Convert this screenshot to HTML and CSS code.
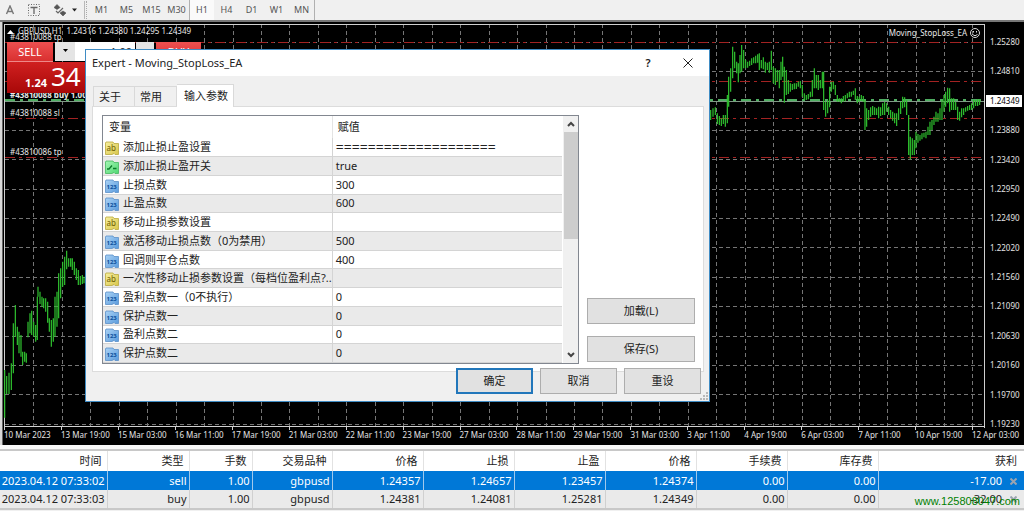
FILE: index.html
```html
<!DOCTYPE html>
<html lang="zh-CN">
<head>
<meta charset="utf-8">
<title>Expert - Moving_StopLoss_EA</title>
<link rel="stylesheet" href="styles.css">
</head>
<body>
<svg class="defs" aria-hidden="true">
  <defs>
    <linearGradient id="gy" x2="1" y2="1"><stop offset="0" stop-color="#f6efa0"/><stop offset="1" stop-color="#d9c64a"/></linearGradient>
    <linearGradient id="gb" x2="1" y2="1"><stop offset="0" stop-color="#a9d2f5"/><stop offset="1" stop-color="#5b9bdc"/></linearGradient>
    <linearGradient id="gg" x2="1" y2="1"><stop offset="0" stop-color="#a4f5b4"/><stop offset="1" stop-color="#4fd872"/></linearGradient>
    <symbol id="i-str" viewBox="0 0 14 14"><path d="M1 1h7l1 1.500h4.500v11H10l-1-1-2 1H.5V2z" fill="url(#gy)" stroke="#b9a83c" stroke-width=".8"/><text x="1.500" y="10" font-size="8" fill="#6d5d00">ab</text></symbol>
    <symbol id="i-num" viewBox="0 0 14 14"><path d="M1 1h7l1 1.500h4.500v11H10l-1-1-2 1H.5V2z" fill="url(#gb)" stroke="#5a8fc8" stroke-width=".8"/><text x="1.500" y="9.500" font-size="6" font-weight="bold" fill="#0c4f9c">123</text></symbol>
    <symbol id="i-bool" viewBox="0 0 14 14"><path d="M1 1h7l1 1.500h4.500v11H10l-1-1-2 1H.5V2z" fill="url(#gg)" stroke="#45b860" stroke-width=".8"/><path d="M2 9h2l3-3.500M8 8.500h3.500" fill="none" stroke="#0c7a2a" stroke-width="1.300"/></symbol>
  </defs>
</svg>

<header class="toolbar">
  <button class="tool" aria-label="文本"><svg width="10" height="10" viewBox="0 0 10 10"><path d="M1.500 9L5 1l3.500 8M3 6.500h4" fill="none" stroke="#777" stroke-width="1.400"/></svg></button>
  <button class="tool" aria-label="文本标签"><svg width="12" height="12" viewBox="0 0 12 12"><rect x=".5" y=".5" width="11" height="11" fill="none" stroke="#666" stroke-dasharray="1 1.500"/><path d="M2.500 3.500h7M6 3.500V10" stroke="#666" stroke-width="1.300"/></svg></button>
  <button class="tool wide" aria-label="箭头"><svg width="24" height="12" viewBox="0 0 24 12"><path d="M0 3.500L3 .5l3 3-3 2zM6 9l3-2 3 2-3 3z" fill="#555" stroke="#555" stroke-width=".6"/><path d="M2 7l2 2 5-5" fill="none" stroke="#666" stroke-width="1.200"/><path d="M18 4.500h5l-2.500 3z" fill="#222"/></svg></button>
  <span class="grip"></span>
  <nav class="periods">
    <button>M1</button><button>M5</button><button>M15</button><button>M30</button><button class="on">H1</button><button>H4</button><button>D1</button><button>W1</button><button>MN</button>
  </nav>
</header>

<main class="chart">
  <svg class="plot" viewBox="4 22 981 408" preserveAspectRatio="none">
    <g shape-rendering="crispEdges" fill="none">
      <path stroke="#757575" stroke-dasharray="4 3" d="M33.500 24V426M62.500 24V426M90.500 24V426M119.500 24V426M147.500 24V426M176.500 24V426M204.500 24V426M233.500 24V426M261.500 24V426M289.500 24V426M318.500 24V426M346.500 24V426M375.500 24V426M403.500 24V426M432.500 24V426M460.500 24V426M489.500 24V426M517.500 24V426M546.500 24V426M574.500 24V426M602.500 24V426M631.500 24V426M659.500 24V426M688.500 24V426M716.500 24V426M745.500 24V426M773.500 24V426M802.500 24V426M830.500 24V426M859.500 24V426M887.500 24V426M916.500 24V426M944.500 24V426M972.500 24V426"/>
      <path stroke="#757575" stroke-dasharray="4 3" d="M5 42.500H984M5 71.500H984M5 130.500H984M5 159.500H984M5 189.500H984M5 218.500H984M5 247.500H984M5 277.500H984M5 306.500H984M5 336.500H984M5 365.500H984M5 394.500H984M5 424.500H984"/>
      <path stroke="#a32222" stroke-dasharray="10 4 3 4" d="M5 42.500H984M5 81.500H984M5 118.500H984M5 157.500H984"/>
      <path stroke="#7f9a85" d="M5 101.500H984"/>
      <path stroke="#4fae62" stroke-width="2" stroke-dasharray="10 5 3 5" d="M5 100H984"/>
      <path stroke="#d0d0d0" d="M4.500 24V430M4 24.500H985M984.500 24V428M4 426.500H985"/>
      <path stroke="#d0d0d0" d="M61.500 426v4M118.500 426v4M175.500 426v4M232.500 426v4M289.500 426v4M346.500 426v4M403.500 426v4M460.500 426v4M516.500 426v4M573.500 426v4M630.500 426v4M687.500 426v4M744.500 426v4M801.500 426v4M858.500 426v4M915.500 426v4M972.500 426v4"/>
    </g>
    <g fill="none" stroke="#2fc22f" stroke-width="3.600">
      <path transform="translate(0 230) scale(.3333)" d="M14 420V563M20 438V492M27 428V492M34 400V480M40 280V430M46 225V320M52 290V345M57 305V370M63 315V380M68 365V405M74 365V395M79 370V398M84 275V322M90 250V310M95 242V315M101 275V320M107 285V335M112 200V330M114 170V200M120 185V222M126 200V230M131 205V235M137 205V245M143 215V278M148 265V305M154 270V350M160 265V335M165 200V320M171 185V290M176 130V265M182 115V205M188 95V170M194 80V165M200 62V118M206 85V110M212 85V110M217 85V120M223 95V135M229 115V150M235 120V165M241 138V165M247 135V162M252 140V160"/>
      <path transform="translate(684 20) scale(.3333)" d="M80 270V300M87 265V290M94 262V285M100 280V312M106 288V315M112 295V318M118 285V312M124 285V320M130 225V310M134 170V260M140 145V215M146 80V175M152 95V145M158 125V160M163 130V187M168 105V160M173 75V155M179 90V145M185 120V145M191 125V143M197 122V138M203 115V135M209 112V130M215 107V130M221 103V128M226 100V150M232 120V145M238 112V148M244 125V158M250 128V150M256 125V158M262 92V150M268 140V190M274 145V195M280 150V185M286 150V205M291 125V180M296 110V170M301 140V248M307 150V225M313 180V222M319 190V215M325 192V210M331 190V208M337 190V207M343 185V200M349 183V205M355 195V230M361 220V240M367 225V240M373 222V238M379 215V232M385 180V230M391 145V205M397 165V205M403 165V210M409 180V205M415 155V205M419 155V270M425 245V290M431 240V280M437 200V262M442 185V215M448 185V208M454 195V225M460 225V245M466 235V245M472 235V250M478 228V245M484 225V243M490 220V235M496 215V232M502 215V230M508 212V225M514 205V240M520 228V250M526 230V245M532 225V243M538 228V245M543 240V330M548 265V320M554 270V300M560 262V290M566 258V285M572 262V285M578 265V285M584 260V295M590 262V288M596 250V285M602 245V285M608 250V275M614 260V285M620 270V295M626 275V302M632 280V310M638 280V318M644 265V300M650 245V282M656 230V265M662 232V262M668 240V285M674 285V405M679 350V418M685 355V405M691 360V405M696 335V385M702 342V368M708 345V362M714 340V358M720 338V352M726 335V355M732 320V345M738 305V345M744 300V330M750 290V315M756 275V305M762 280V305M768 265V300M774 240V300M780 225V275M785 215V260M791 203V250M797 205V275M803 235V270M809 235V270M815 245V270M821 260V300M827 275V302M833 265V292M839 265V285M845 262V275M851 258V272M857 255V270M863 250V270M869 240V265M875 240V258M881 238V258M887 238V255"/>
    </g>
    <path d="M7 34h7l-3.500-4z" fill="#fff"/>
    <g class="chart-text">
      <text x="18" y="34">GBPUSD,H1&#160; 1.24316 1.24380 1.24295 1.24349</text>
      <text x="10" y="40">#43810088 tp</text>
      <text x="10" y="98" font-weight="bold">#43810088 buy 1.00</text>
      <text x="10" y="116">#43810088 sl</text>
      <text x="10" y="155">#43810086 tp</text>
      <text x="967" y="36" text-anchor="end">Moving_StopLoss_EA</text>
    </g>
    <g fill="none" stroke="#ddd"><circle cx="975" cy="33" r="4.500"/><path d="M972.500 34.500q2.500 2.500 5 0M973.500 31v1.500M976.500 31v1.500"/></g>
  </svg>
  <div class="prices">
    <span>1.25280</span><span>1.24810</span><span class="bid">1.24349</span><span>1.23880</span><span>1.23420</span><span>1.22950</span><span>1.22490</span><span>1.22020</span><span>1.21560</span><span>1.21090</span><span>1.20630</span><span>1.20160</span><span>1.19700</span><span>1.19230</span>
  </div>
  <div class="times">
    <span>10 Mar 2023</span><span>13 Mar 19:00</span><span>15 Mar 03:00</span><span>16 Mar 11:00</span><span>17 Mar 19:00</span><span>21 Mar 03:00</span><span>22 Mar 11:00</span><span>23 Mar 19:00</span><span>27 Mar 03:00</span><span>28 Mar 11:00</span><span>29 Mar 19:00</span><span>31 Mar 03:00</span><span>3 Apr 11:00</span><span>4 Apr 19:00</span><span>6 Apr 03:00</span><span>7 Apr 11:00</span><span>10 Apr 19:00</span><span>12 Apr 03:00</span>
  </div>

  <div class="trade">
    <button class="side">SELL</button>
    <button class="step" aria-label="减少"><svg width="5" height="3" viewBox="0 0 5 3"><path d="M0 0h5L2.500 3z"/></svg></button>
    <input class="lots" value="1.00" aria-label="手数">
    <button class="step" aria-label="增加"></button>
    <button class="side buy">BUY</button>
    <div class="ask"><small>1.24</small><b>34</b></div>
  </div>

  <section class="dialog" role="dialog" aria-labelledby="dlg-title">
    <div class="titlebar">
      <h1 id="dlg-title">Expert - Moving_StopLoss_EA</h1>
      <button aria-label="帮助">?</button>
      <button aria-label="关闭"><svg width="10" height="10" viewBox="0 0 10 10"><path d="M.5 .5l9 9M9.500 .5l-9 9" stroke="#222" fill="none"/></svg></button>
    </div>
    <div class="tabs" role="tablist">
      <button role="tab">关于</button><button role="tab">常用</button><button role="tab" class="active" aria-selected="true">输入参数</button>
    </div>
    <div class="panel">
      <div class="list">
        <table class="params">
          <thead><tr><th>变量</th><th>赋值</th></tr></thead>
          <tbody>
            <tr><td><svg class="ic"><use href="#i-str"/></svg>添加止损止盈设置</td><td class="rule">====================</td></tr>
            <tr><td><svg class="ic"><use href="#i-bool"/></svg>添加止损止盈开关</td><td>true</td></tr>
            <tr><td><svg class="ic"><use href="#i-num"/></svg>止损点数</td><td>300</td></tr>
            <tr><td><svg class="ic"><use href="#i-num"/></svg>止盈点数</td><td>600</td></tr>
            <tr><td><svg class="ic"><use href="#i-str"/></svg>移动止损参数设置</td><td></td></tr>
            <tr><td><svg class="ic"><use href="#i-num"/></svg>激活移动止损点数（0为禁用）</td><td>500</td></tr>
            <tr><td><svg class="ic"><use href="#i-num"/></svg>回调则平仓点数</td><td>400</td></tr>
            <tr><td><svg class="ic"><use href="#i-str"/></svg>一次性移动止损参数设置（每档位盈利点?..</td><td></td></tr>
            <tr><td><svg class="ic"><use href="#i-num"/></svg>盈利点数一（0不执行）</td><td>0</td></tr>
            <tr><td><svg class="ic"><use href="#i-num"/></svg>保护点数一</td><td>0</td></tr>
            <tr><td><svg class="ic"><use href="#i-num"/></svg>盈利点数二</td><td>0</td></tr>
            <tr><td><svg class="ic"><use href="#i-num"/></svg>保护点数二</td><td>0</td></tr>
          </tbody>
        </table>
        <div class="scroll">
          <svg width="8" height="16" viewBox="0 0 8 16"><path d="M1 10l3-3 3 3" fill="none" stroke="#444" stroke-width="2"/></svg>
          <div class="thumb"></div>
          <svg width="8" height="16" viewBox="0 0 8 16"><path d="M1 6l3 3 3-3" fill="none" stroke="#444" stroke-width="2"/></svg>
        </div>
      </div>
      <div class="files">
        <button class="btn">加载(L)</button>
        <button class="btn">保存(S)</button>
      </div>
    </div>
    <div class="actions">
      <button class="btn primary">确定</button><button class="btn">取消</button><button class="btn">重设</button>
    </div>
    <svg class="resize" width="8" height="8" viewBox="0 0 8 8"><path d="M6 0h2v2H6zM3 3h2v2H3zM6 3h2v2H6zM0 6h2v2H0zM3 6h2v2H3zM6 6h2v2H6z" fill="#b8b8b8"/></svg>
  </section>
</main>

<section class="orders">
  <table>
    <colgroup><col class="c1"><col class="c2"><col class="c3"><col class="c4"><col class="c5"><col class="c5"><col class="c5"><col class="c5"><col class="c5"><col class="c5"><col></colgroup>
    <thead><tr><th>时间</th><th>类型</th><th>手数</th><th>交易品种</th><th>价格</th><th>止损</th><th>止盈</th><th>价格</th><th>手续费</th><th>库存费</th><th>获利</th></tr></thead>
    <tbody>
      <tr class="sel"><td>2023.04.12 07:33:02</td><td>sell</td><td>1.00</td><td>gbpusd</td><td>1.24357</td><td>1.24657</td><td>1.23457</td><td>1.24374</td><td>0.00</td><td>0.00</td><td>-17.00<button aria-label="平仓"><svg width="7" height="7" viewBox="0 0 7 7"><path d="M.5 .5l6 6M6.500 .5l-6 6"/></svg></button></td></tr>
      <tr><td>2023.04.12 07:33:03</td><td>buy</td><td>1.00</td><td>gbpusd</td><td>1.24381</td><td>1.24081</td><td>1.25281</td><td>1.24349</td><td>0.00</td><td>0.00</td><td>-32.00<button aria-label="平仓"><svg width="7" height="7" viewBox="0 0 7 7"><path d="M.5 .5l6 6M6.500 .5l-6 6"/></svg></button></td></tr>
    </tbody>
  </table>
  <span class="watermark">www.125808047.com</span>
</section>
</body>
</html>
```
FILE: styles.css
```css
* { box-sizing: border-box; }
body {
  margin: 0;
  background: #f0f0f0;
  font: 11px/16px "Noto Sans", "Noto Sans CJK SC", sans-serif;
  color: #222;
}
button, input { font: inherit; color: inherit; margin: 0; padding: 0; border: 0; background: none; }
.defs { position: absolute; width: 0; height: 0; }

.toolbar { display: flex; align-items: center; height: 20px; background: #f0f0f0; }
.tool { display: flex; align-items: center; justify-content: center; width: 20px; height: 20px; }
.tool + .tool { margin-left: 4px; }
.tool.wide { width: 28px; margin-left: 8px; }
.grip { width: 3px; height: 18px; margin: 0 2px 0 4px; border-left: 1px solid #b8b8b8; border-right: 1px dotted #aaa; }
.periods { display: flex; height: 20px; border-right: 1px solid #b0b0b0; }
.periods button { width: 25px; font-size: 9px; color: #555; }
.periods .on { background: #fafafa; border-left: 1px solid #b0b0b0; }

.chart {
  position: relative;
  display: grid;
  grid-template-columns: 1fr 39px;
  grid-template-rows: auto 15px;
  padding-left: 4px;
  border-top: 2px solid #777;
  background: linear-gradient(90deg, #d8d8d8 2px, #666 2px 3px, #000 3px);
  color: #e4e4e4;
  font-size: 8px;
}
.plot { display: block; width: 100%; height: 408px; }
.chart-text { font-size: 8px; fill: #e8e8e8; }
.prices { display: flex; flex-direction: column; justify-content: space-between; padding-top: 14px; }
.prices span { height: 12px; line-height: 12px; padding-left: 5px; }
.prices .bid { background: #fff; color: #000; margin-right: 2px; margin-left: 1px; padding-left: 4px; }
.times { grid-column: 1 / -1; display: grid; grid-template-columns: repeat(18, 57fr); margin-right: -5px; overflow: hidden; line-height: 10px; white-space: nowrap; }
.times span { min-width: 0; }

.trade {
  position: absolute;
  top: 20px;
  left: 7px;
  display: grid;
  grid-template-columns: 47px 21px 60px 19px 47px;
  grid-template-rows: 20px 31px;
}
.side { background: linear-gradient(#ee5050, #d93030); color: #fff; font-size: 11px; margin-right: 1px; border-bottom: 1px solid #e88; }
.side.buy { margin-left: 2px; margin-right: 0; }
.step { background: #e4e4e4; margin: 0 0 1px 1px; }
.step svg { display: block; margin: -3px auto 0; }
.lots { width: 100%; min-width: 0; background: #fff; color: #222; text-align: right; padding-right: 3px; font-size: 11px; margin-bottom: 1px; }
.ask { grid-column: 1 / 4; width: 98px; background: linear-gradient(#d02020, #a80808); color: #fff; display: flex; align-items: flex-end; padding: 0 0 3px 18px; gap: 4px; }
.ask small { font: bold 11px/14px "Noto Sans", sans-serif; }
.ask b { font: 26px/27px "Noto Sans", sans-serif; }

.dialog {
  position: absolute;
  top: 27px;
  left: 85px;
  width: 625px;
  border: 1px solid #3f8cc4;
  background: #f0f0f0;
  color: #222;
  font-size: 11px;
  padding-bottom: 7px;
}
.titlebar { display: flex; align-items: center; height: 26px; background: #fff; padding: 0 6px; }
.titlebar h1 { flex: 1; margin: 0; font-size: 11px; font-weight: 400; }
.titlebar button { display: flex; align-items: center; justify-content: center; width: 30px; height: 24px; margin-left: 10px; font-weight: 600; }
.tabs { display: flex; align-items: flex-end; height: 30px; padding-left: 7px; }
.tabs button { width: 42px; height: 20px; border: 1px solid #d9d9d9; border-bottom: 0; text-align: left; padding-left: 5px; }
.tabs button + button { border-left: 0; }
.tabs .active { width: 57px; height: 23px; margin-bottom: -1px; background: #fff; padding-left: 7px; position: relative; }
.panel { display: flex; justify-content: space-between; margin: 0 5px 0 6px; border: 1px solid #dcdcdc; background: #fff; padding: 8px 8px 7px 9px; }
.list { display: flex; width: 477px; border: 1px solid #828790; }
.params { flex: 1; height: 247px; border-collapse: collapse; table-layout: fixed; }
.params th { width: 229px; height: 22px; padding: 0 0 0 6px; text-align: left; font-weight: 400; }
.params th + th { width: auto; padding-left: 5px; border-left: 1px solid #e4e4e4; }
.params td { height: 18px; padding: 0 0 0 2px; line-height: 16px; white-space: nowrap; border-bottom: 1px solid #d4d4d4; }
.params td + td { border-left: 1px solid #d4d4d4; padding-left: 3px; }
.params .rule { font-size: 14px; }
.params tbody tr:nth-child(even) { background: #eaeaea; }
.ic { width: 14px; height: 14px; margin-right: 4px; vertical-align: middle; }
.scroll { display: flex; flex-direction: column; align-items: center; width: 16px; background: #f0f0f0; border-left: 1px solid #fff; }
.thumb { width: 14px; height: 107px; margin-bottom: auto; background: #cdcdcd; }
.files { display: flex; flex-direction: column; justify-content: flex-end; gap: 12px; width: 108px; padding-bottom: 2px; }
.btn { height: 26px; background: #e1e1e1; border: 1px solid #adadad; }
.actions { display: flex; justify-content: flex-end; gap: 7px; margin-top: -4px; padding-right: 8px; }
.actions .btn { width: 77px; }
.actions .primary { border: 2px solid #2277bb; }
.resize { position: absolute; right: 1px; bottom: 1px; }

.orders { position: relative; border-top: 4px solid #f8f8f8; }
.orders table { width: 100%; border-collapse: collapse; table-layout: fixed; border-top: 2px solid #c8c8c8; border-bottom: 2px solid #c8c8c8; }
.c1 { width: 107px; } .c2 { width: 82px; } .c3 { width: 63px; } .c4 { width: 80px; } .c5 { width: 91px; }
.orders th { height: 21px; padding: 0 5px 0 0; background: #fff; font-weight: 400; text-align: right; border-right: 1px solid #e2e2e2; }
.orders td { height: 19px; padding: 0 2px 0 0; text-align: right; white-space: nowrap; background: #eaeaea; border-right: 1px solid #d0d0d0; }
.orders .sel td { background: #0078d7; color: #fff; border-right-color: #a0c8ec; }
.orders td:last-child, .orders th:last-child { padding-right: 7px; border-right: 0; }
.orders td button { margin-left: 8px; }
.orders td svg { display: block; fill: none; stroke: #9aa4b0; stroke-width: 2; }
.watermark { position: absolute; right: 4px; bottom: 2px; font: 11px/14px "Liberation Sans", sans-serif; color: #008000; }
```
